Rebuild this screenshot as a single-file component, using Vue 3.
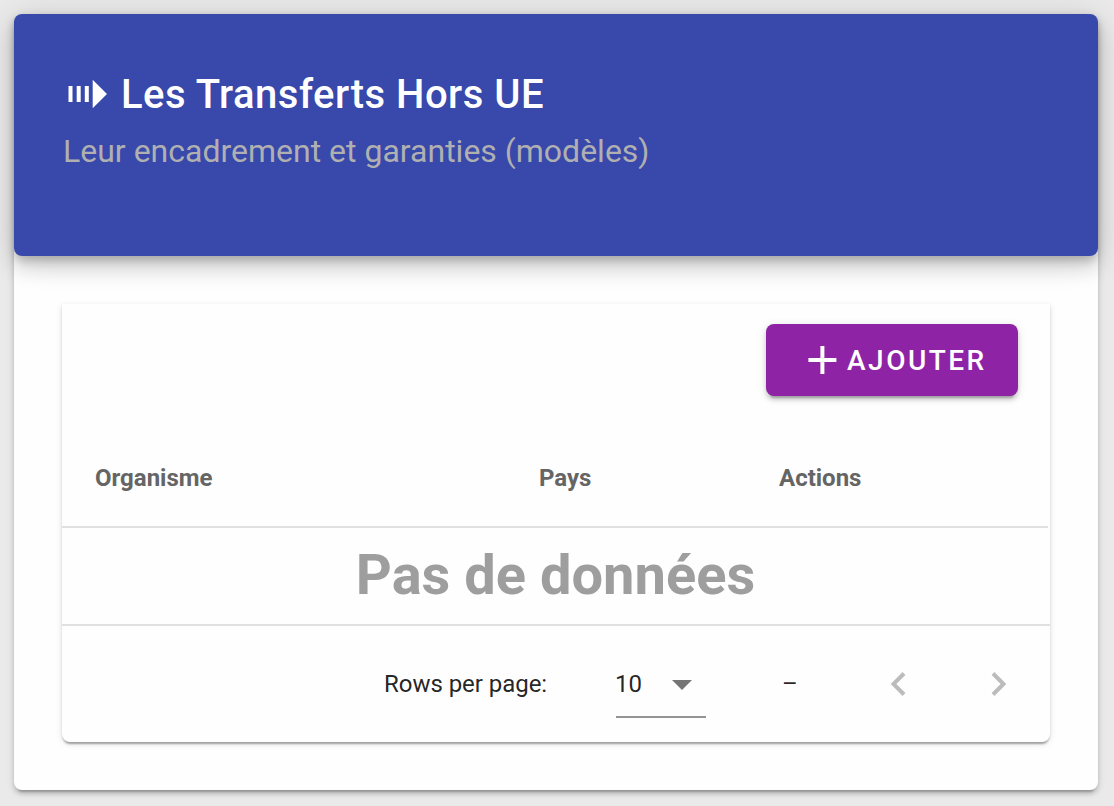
<script setup>
const headers = ['Organisme', 'Pays', 'Actions']
</script>

<template>
  <main class="page">
    <section class="card">
      <header class="banner">
        <h1 class="title">
          <svg class="title-icon" width="44" height="32" viewBox="0 0 44 32" aria-hidden="true">
            <path d="M4.5 8h4v16h-4zM12.7 8h4v16h-4zM20.8 8h4v16h-4zM28.7 1.7v28.6L43 16z" />
          </svg>
          <span>Les Transferts Hors UE</span>
        </h1>
        <p class="subtitle">Leur encadrement et garanties (modèles)</p>
      </header>

      <div class="table-card">
        <div class="toolbar">
          <button class="add" type="button">
            <svg width="30" height="28" viewBox="0 0 30 28" aria-hidden="true">
              <path d="M13.4 0h4v12h12v4h-12v12h-4V16h-12v-4h12z" />
            </svg>
            <span>AJOUTER</span>
          </button>
        </div>
        <div class="head-row">
          <div v-for="h in headers" :key="h" class="head-cell">{{ h }}</div>
        </div>
        <div class="empty">Pas de données</div>
        <footer class="pager">
          <span class="rows-label">Rows per page:</span>
          <div class="select">
            <span>10</span>
            <svg width="20" height="10" viewBox="0 0 20 10" aria-hidden="true"><path d="M0 0h20L10 10z" /></svg>
          </div>
          <span class="range">–</span>
          <svg class="chevron prev" width="16" height="24" viewBox="0 0 16 24" aria-hidden="true">
            <path d="M14 1.5 3.5 12 14 22.5" />
          </svg>
          <svg class="chevron" width="16" height="24" viewBox="0 0 16 24" aria-hidden="true">
            <path d="M2 1.5 12.5 12 2 22.5" />
          </svg>
        </footer>
      </div>
    </section>
  </main>
</template>

<style>
html, body { background: #eaeaea; }
body { margin: 0; overflow: hidden; }
</style>

<style scoped>
.page {
  box-sizing: border-box;
  width: 1114px;
  height: 806px;
  padding: 14px 16px 16px 14px;
  font-family: Roboto, sans-serif;
  color: rgba(0, 0, 0, 0.87);
}
.card {
  height: 776px;
  border-radius: 8px;
  background: #fefefe;
  box-shadow: 0 6px 2px -4px rgba(0, 0, 0, .2), 0 4px 4px rgba(0, 0, 0, .14), 0 2px 10px rgba(0, 0, 0, .12);
}
.banner {
  box-sizing: border-box;
  height: 242px;
  padding: 48px 50px;
  border-radius: 8px;
  background: #3848ab;
  box-shadow: 0 6px 10px -2px rgba(0, 0, 0, .2), 0 12px 20px rgba(0, 0, 0, .14), 0 2px 36px rgba(0, 0, 0, .12);
}
.title {
  display: flex;
  align-items: center;
  gap: 13px;
  margin: 0;
  color: #fff;
  font-size: 40px;
  font-weight: 500;
  line-height: 64px;
  letter-spacing: 0.5px;
  white-space: nowrap;
}
.title span { padding-top: 2px; line-height: 62px; }
.title-icon { fill: #fff; }
.subtitle {
  margin: 0 0 0 -1px;
  color: #b0b0b0;
  font-size: 32px;
  line-height: 50px;
  letter-spacing: 0;
  white-space: nowrap;
}
.table-card {
  display: flex;
  flex-direction: column;
  height: 438px;
  margin: 48px 48px 0;
  border-radius: 0 0 8px 8px;
  background: #fefefe;
  box-shadow: 0 4px 2px -2px rgba(0, 0, 0, .2), 0 2px 2px rgba(0, 0, 0, .14), 0 2px 6px rgba(0, 0, 0, .12);
}
.toolbar {
  display: flex;
  justify-content: flex-end;
  height: 126px;
  box-sizing: border-box;
  padding: 20px 32px 0;
}
.add {
  display: flex;
  align-items: center;
  gap: 10px;
  box-sizing: border-box;
  width: 252px;
  height: 72px;
  padding: 0 0 0 41px;
  border: 0;
  border-radius: 8px;
  background: #8f23a6;
  color: #fff;
  font: 500 28px/72px Roboto, sans-serif;
  letter-spacing: 2.5px;
  box-shadow: 0 6px 2px -4px rgba(0, 0, 0, .2), 0 4px 4px rgba(0, 0, 0, .14), 0 2px 10px rgba(0, 0, 0, .12);
}
.add svg { fill: #fff; }
.add span { padding-top: 2px; line-height: 70px; }
.head-row {
  display: grid;
  grid-template-columns: 444px 240px 1fr;
  box-sizing: border-box;
  height: 98px;
  margin-right: 2px;
  border-bottom: 2px solid #e0e0e0;
  color: #656565;
  font-size: 24px;
  font-weight: 700;
  line-height: 96px;
}
.head-cell { padding-left: 33px; }
.empty {
  box-sizing: border-box;
  height: 98px;
  padding-right: 1px;
  border-bottom: 2px solid #e0e0e0;
  color: #9e9e9e;
  font-size: 56px;
  font-weight: 700;
  line-height: 94px;
  text-align: center;
}
.pager {
  display: flex;
  align-items: center;
  height: 116px;
  padding-left: 322px;
  font-size: 24px;
  line-height: 28px;
}
.rows-label { width: 232px; letter-spacing: -0.04px; white-space: nowrap; }
.select {
  display: flex;
  align-items: center;
  box-sizing: border-box;
  width: 90px;
  height: 68px;
  border-bottom: 2px solid #949494;
  padding-top: 2px;
}
.select span { width: 57px; margin-left: -1px; }
.select svg { margin-top: 1px; fill: #757575; }
.range { width: 107.5px; margin-left: 76px; }
.chevron { fill: none; stroke: #bcbcbc; stroke-width: 4; }
.prev { margin-right: 85px; }
</style>
